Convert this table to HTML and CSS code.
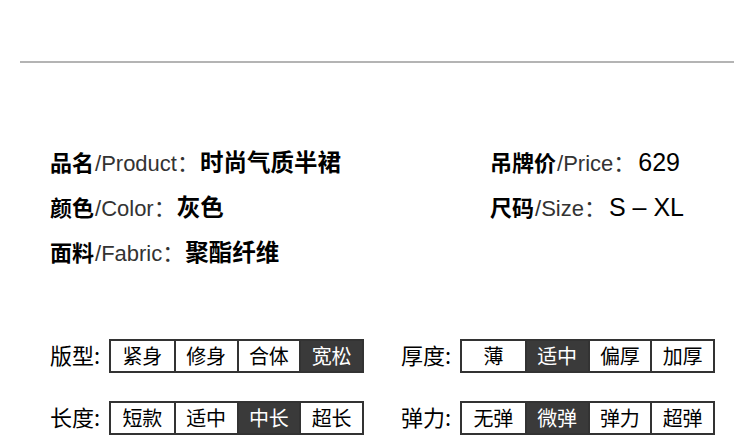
FILE: index.html
```html
<!DOCTYPE html>
<html>
   <head>
      <meta charset="utf-8">
      <title>商品信息</title>
      <link rel="stylesheet" href="styles.css">
   </head>
   <body>
      <div class="Rule"></div>

      <div class="Info">
         <div class="InfoCol">
            <div class="InfoRow"><span class="Key">品名</span><span class="En">/Product</span><span class="Colon">：</span><span class="Val">时尚气质半裙</span></div>
            <div class="InfoRow"><span class="Key">颜色</span><span class="En">/Color</span><span class="Colon">：</span><span class="Val">灰色</span></div>
            <div class="InfoRow"><span class="Key">面料</span><span class="En">/Fabric</span><span class="Colon">：</span><span class="Val">聚酯纤维</span></div>
         </div>
         <div class="InfoCol">
            <div class="InfoRow"><span class="Key">吊牌价</span><span class="En">/Price</span><span class="Colon">：</span><span class="Num">629</span></div>
            <div class="InfoRow"><span class="Key">尺码</span><span class="En">/Size</span><span class="Colon">：</span><span class="Num">S – XL</span></div>
         </div>
      </div>

      <div class="Specs">
         <div class="Spec">
            <span class="SpecName">版型:</span>
            <div class="Opts"><span>紧身</span><span>修身</span><span>合体</span><span class="On">宽松</span></div>
         </div>
         <div class="Spec">
            <span class="SpecName">厚度:</span>
            <div class="Opts"><span>薄</span><span class="On">适中</span><span>偏厚</span><span>加厚</span></div>
         </div>
         <div class="Spec">
            <span class="SpecName">长度:</span>
            <div class="Opts"><span>短款</span><span>适中</span><span class="On">中长</span><span>超长</span></div>
         </div>
         <div class="Spec">
            <span class="SpecName">弹力:</span>
            <div class="Opts"><span>无弹</span><span class="On">微弹</span><span>弹力</span><span>超弹</span></div>
         </div>
      </div>
   </body>
</html>
```

FILE: styles.css
```css
body
{
   margin:      0;
   background:  #fff;
   color:       #000;
   font-family: "Noto Sans CJK SC", "Liberation Sans", sans-serif;
}
.Rule
{
   margin:     61px 16px 0 20px;
   height:     2px;
   background: #b4b4b4;
}

/* product info */
.Info
{
   display:     grid;
   grid-template-columns: 440px 1fr;
   margin:      76px 0 0 50px;
}
.InfoRow
{
   height:      45px;
   line-height: 45px;
   display:     flex;
   align-items: baseline;
   white-space: nowrap;
}
.Key
{
   font-size:   22px;
   font-weight: bold;
}
.En
{
   font-family: "Liberation Sans", sans-serif;
   font-size:   22px;
   color:       #333;
   margin-left: 1px;
}
.Colon
{
   font-size: 22px;
   color:     #333;
}
.Val
{
   font-size:   23.5px;
   font-weight: bold;
   margin-left: 1px;
}
.Num
{
   font-family: "Liberation Sans", sans-serif;
   font-size:   25px;
   margin-left: 3px;
}

/* option boxes */
.Specs
{
   display:     grid;
   grid-template-columns: 351px 1fr;
   row-gap:     27px;
   margin:      64px 0 0 50px;
}
.Spec
{
   display:     flex;
   align-items: baseline;
}
.SpecName
{
   width:       59px;
   font-size:   22px;
}
.Opts
{
   display:    grid;
   grid-template-columns: repeat(4, 1fr);
   width:      255px;
   box-sizing: border-box;
   border:     2px solid #333;
}
.Opts span
{
   height:      30px;
   line-height: 30px;
   text-align:  center;
   font-size:   20px;
   border-left: 2px solid #333;
}
.Opts span:first-child
{
   border-left: none;
}
.Opts .On
{
   background: #3a3a3a;
   color:      #fff;
}
```
